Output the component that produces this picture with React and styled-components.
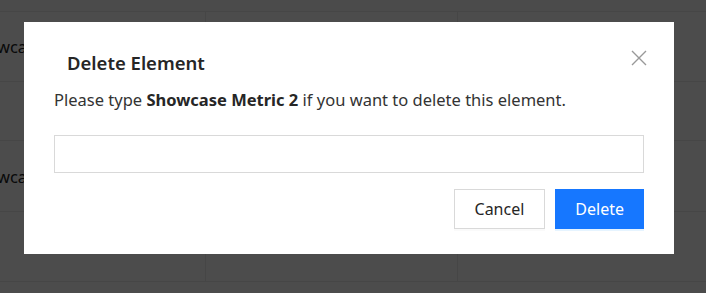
import React from "react";
import styled, { createGlobalStyle } from "styled-components";

const GlobalStyle = createGlobalStyle`
  html, body {
    margin: 0;
    padding: 0;
    background: #fff;
    font-family: "Noto Sans", "Open Sans", sans-serif;
    overflow: hidden;
  }
`;

const rows = [
  { name: "Showcase Metric 1", height: 70 },
  { name: "", height: 59 },
  { name: "Showcase Metric 2", height: 71 },
  { name: "", height: 70 },
];

const App = () => {
  return (
    <Page>
      <GlobalStyle />
      <Table>
        <HeadRow />
        {rows.map((r, i) => (
          <Row key={i} $h={r.height}>
            <Cell>{r.name}</Cell>
            <Cell />
            <Cell />
          </Row>
        ))}
      </Table>

      <Overlay>
        <Modal>
          <Header>
            <Title>Delete Element</Title>
            <Close aria-label="Close">
              <svg width="16" height="16" viewBox="0 0 16 16">
                <path
                  d="M1 1 L15 15 M15 1 L1 15"
                  stroke="#999"
                  strokeWidth="1.4"
                  fill="none"
                />
              </svg>
            </Close>
          </Header>
          <Message>
            Please type <b>Showcase Metric 2</b> if you want to delete this
            element.
          </Message>
          <Input type="text" />
          <Footer>
            <Button>Cancel</Button>
            <Button $primary>Delete</Button>
          </Footer>
        </Modal>
      </Overlay>
    </Page>
  );
};

export default App;

const Page = styled.div`
  position: relative;
  width: 100vw;
  height: 100vh;
  overflow: hidden;
`;

const Table = styled.div`
  margin-left: -48px;
  width: 820px;
`;

const HeadRow = styled.div`
  height: 11px;
  background: #fafafa;
  border-bottom: 1px solid #ececec;
`;

const Row = styled.div`
  display: grid;
  grid-template-columns: 253px 252px 1fr;
  height: ${(p) => p.$h - 1}px;
  border-bottom: 1px solid #ececec;
`;

const Cell = styled.div`
  display: flex;
  align-items: center;
  padding-left: 16px;
  font-size: 16.5px;
  color: #222;
  white-space: nowrap;
  & + & {
    border-left: 1px solid #ececec;
  }
`;

const Overlay = styled.div`
  position: fixed;
  inset: 0;
  background: rgba(0, 0, 0, 0.7);
  padding: 22px 0 0 24px;
`;

const Modal = styled.div`
  width: 650px;
  height: 232px;
  box-sizing: border-box;
  background: #fff;
  padding: 28px 30px 25px;
  display: flex;
  flex-direction: column;
`;

const Header = styled.div`
  display: flex;
  align-items: center;
  justify-content: space-between;
  height: 26px;
  padding-left: 13px;
  margin-right: -3px;
`;

const Title = styled.h3`
  margin: 0;
  font-size: 18.5px;
  font-weight: 600;
  color: #262626;
  line-height: 26px;
`;

const Close = styled.button`
  border: none;
  background: none;
  padding: 0;
  width: 16px;
  height: 16px;
  margin-top: -11px;
  cursor: pointer;
  svg {
    display: block;
  }
`;

const Message = styled.p`
  margin: 12px 0 0;
  font-size: 16.5px;
  line-height: 24px;
  color: #333;
  b {
    font-weight: 700;
    color: #262626;
  }
`;

const Input = styled.input`
  margin-top: 23px;
  height: 38px;
  box-sizing: border-box;
  border: 1px solid #d9d9d9;
  outline: none;
  padding: 0 11px;
  font-size: 16px;
  font-family: inherit;
`;

const Footer = styled.div`
  display: flex;
  justify-content: flex-end;
  gap: 10px;
  margin-top: 16px;
`;

const Button = styled.button`
  height: 40px;
  box-sizing: border-box;
  padding: 0 ${(p) => (p.$primary ? 19 : 20)}px;
  font-family: inherit;
  font-size: 16px;
  cursor: pointer;
  border: 1px solid ${(p) => (p.$primary ? "#1677ff" : "#d9d9d9")};
  background: ${(p) => (p.$primary ? "#1677ff" : "#fff")};
  color: ${(p) => (p.$primary ? "#fff" : "#262626")};
  box-shadow: 0 2px 0 ${(p) =>
    p.$primary ? "rgba(5, 145, 255, 0.1)" : "rgba(0, 0, 0, 0.02)"};
`;
